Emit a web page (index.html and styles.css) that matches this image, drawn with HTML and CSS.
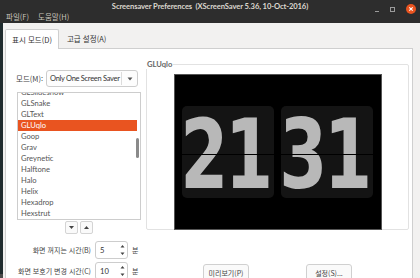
FILE: index.html
```html
<!DOCTYPE html>
<html lang="ko">
<head>
<meta charset="utf-8">
<link rel="stylesheet" href="styles.css">
</head>
<body>
<div class="screen">
  <header class="titlebar">
    <div class="title">Screensaver Preferences &nbsp;(XScreenSaver 5.36, 10-Oct-2016)</div>
    <div class="wctl">
      <span class="wmin"></span>
      <span class="wmax"></span>
      <span class="wclose"><svg width="10" height="10" viewBox="0 0 10 10"><circle cx="5" cy="5" r="5" fill="#e95420"/><path d="M3.3 3.3L6.7 6.7M6.7 3.3L3.3 6.7" stroke="#fff" stroke-width="1.1"/></svg></span>
    </div>
  </header>
  <nav class="menubar">
    <span class="menu">파일(F)</span>
    <span class="menu">도움말(H)</span>
  </nav>
  <div class="content">
    <div class="tabs">
      <div class="tab active">표시 모드(D)</div>
      <div class="tab">고급 설정(A)</div>
    </div>
    <div class="panel">
      <div class="leftcol">
        <div class="moderow">
          <span class="lbl">모드(M):</span>
          <div class="combo">
            <span class="combo-text">Only One Screen Saver</span>
            <span class="combo-btn"><svg width="6" height="4" viewBox="0 0 6 4"><path d="M0.5 0.5h5L3 3.5z" fill="#555"/></svg></span>
          </div>
        </div>
        <div class="list">
          <div class="items">
            <div class="item">GLSlideshow</div>
            <div class="item">GLSnake</div>
            <div class="item">GLText</div>
            <div class="item sel">GLUqlo</div>
            <div class="item">Goop</div>
            <div class="item">Grav</div>
            <div class="item">Greynetic</div>
            <div class="item">Halftone</div>
            <div class="item">Halo</div>
            <div class="item">Helix</div>
            <div class="item">Hexadrop</div>
            <div class="item">Hexstrut</div>
          </div>
          <div class="thumb"></div>
        </div>
        <div class="arrows">
          <span class="abtn"><svg width="5" height="3" viewBox="0 0 5 3"><path d="M0 0h5L2.5 3z" fill="#444"/></svg></span>
          <span class="abtn"><svg width="5" height="3" viewBox="0 0 5 3"><path d="M0 3h5L2.5 0z" fill="#444"/></svg></span>
        </div>
        <div class="spins">
          <span class="slbl">화면 꺼지는 시간(B)</span>
          <div class="spin"><span>5</span><span class="sarr"><svg width="5" height="12" viewBox="0 0 5 12"><path d="M0.5 3.5h4L2.5 1z M0.5 8.5h4L2.5 11z" fill="#444"/></svg></span></div>
          <span class="unit">분</span>
          <span class="slbl">화면 보호기 변경 시간(C)</span>
          <div class="spin"><span>10</span><span class="sarr"><svg width="5" height="12" viewBox="0 0 5 12"><path d="M0.5 3.5h4L2.5 1z M0.5 8.5h4L2.5 11z" fill="#444"/></svg></span></div>
          <span class="unit">분</span>
        </div>
      </div>
      <div class="rightcol">
        <fieldset class="frame">
          <legend>GLUqlo</legend>
          <div class="preview">
            <div class="card"><span class="digits">21</span><i class="split"></i></div>
            <div class="card"><span class="digits">31</span><i class="split"></i></div>
          </div>
        </fieldset>
        <div class="buttons">
          <span class="btn">미리보기(P)</span>
          <span class="btn">설정(S)...</span>
        </div>
      </div>
    </div>
  </div>
</div>
</body>
</html>
```
FILE: styles.css
```css
* { box-sizing: border-box; }
html, body { margin: 0; padding: 0; }
body {
  width: 420px; height: 278px; overflow: hidden;
  background: #4a4a4a;
  font-family: "Lato", "Noto Sans CJK KR", sans-serif;
  font-size: 8px;
  color: #3c3c3c;
}
.screen { width: 420px; height: 274px; display: flex; flex-direction: column; background: #1f2b2e; }
.titlebar {
  height: 18px; background: #2d2d2d; position: relative;
  display: flex; align-items: center; justify-content: center; padding-top: 1px;
}
.title { color: #dcd8cf; font-weight: bold; font-size: 7.6px; letter-spacing: -0.1px; }
.wctl { position: absolute; right: 4px; top: 4px; display: flex; align-items: center; gap: 11px; }
.wmin { width: 4px; height: 1px; background: #9a9a9a; margin-top: 5px; }
.wmax { width: 5px; height: 5px; border: 1px solid #9a9a9a; }
.wclose { width: 10px; height: 10px; display: flex; }
.menubar { height: 14px; background: #2d2d2d; display: flex; align-items: center; gap: 9px; padding-left: 6px; padding-bottom: 1px; }
.menu { color: #c9c5bc; font-family: "Noto Sans CJK KR", sans-serif; font-size: 7.5px; }
.content { flex: 1; margin-left: 3px; background: #f2f1f0; padding: 6px 7px 0 2px; display: flex; flex-direction: column; }
.tabs { display: flex; height: 19px; gap: 3px; }
.tab { padding: 0 5px; display: flex; align-items: center; font-family: "Noto Sans CJK KR", sans-serif; font-size: 7.5px; color: #333; }
.tab.active { background: #fff; border: 1px solid #cfcfcf; border-bottom: none; border-radius: 2px 2px 0 0; position: relative; z-index: 1; height: 20px; padding: 0 6px; }
.panel {
  flex: 1; background: #fff; border: 1px solid #cfcfcf; border-bottom: none;
  display: grid; grid-template-columns: 124px 263px; column-gap: 5px;
  padding-left: 11px;
}
.leftcol { display: flex; flex-direction: column; padding-top: 21px; }
.moderow { display: flex; align-items: center; gap: 3px; margin-left: -1px; }
.lbl { font-family: "Noto Sans CJK KR", sans-serif; font-size: 7.5px; color: #444; }
.combo { width: 92px; height: 17px; border: 1px solid #cdcdcd; border-radius: 3px; display: flex; align-items: center; background: #fdfdfd; }
.combo-text { flex: 1; padding-left: 3px; font-size: 7.5px; letter-spacing: -0.3px; color: #333; white-space: nowrap; overflow: hidden; border-right: 1px solid #dcdcdc; line-height: 13px; }
.combo-btn { width: 15px; display: flex; justify-content: center; }
.list { margin-top: 5px; height: 128px; border: 1px solid #cdcdcd; position: relative; overflow: hidden; }
.items { margin-top: -6px; }
.item { height: 11px; line-height: 11px; padding-left: 3px; color: #555; font-size: 7.6px; width: 119px; }
.item.sel { background: #e95420; color: #fff; }
.thumb { position: absolute; right: 1px; top: 45px; width: 3px; height: 20px; background: #8a8a8a; border-radius: 2px; }
.arrows { display: flex; justify-content: center; gap: 2px; margin-top: 1px; }
.abtn { width: 13px; height: 13px; border: 1px solid #d4d4d4; border-radius: 2px; display: flex; align-items: center; justify-content: center; background: #fafafa; }
.spins { display: grid; grid-template-columns: 75px 33px auto; column-gap: 4px; row-gap: 3px; margin-top: 7px; margin-left: -1px; align-items: center; }
.slbl { justify-self: end; font-family: "Noto Sans CJK KR", sans-serif; font-size: 7px; color: #444; white-space: nowrap; }
.spin { height: 18px; border: 1px solid #cdcdcd; border-radius: 3px; display: flex; align-items: center; justify-content: space-between; padding: 0 2px 0 4px; font-size: 7.6px; color: #333; }
.sarr { display: flex; }
.unit { font-family: "Noto Sans CJK KR", sans-serif; font-size: 7px; color: #444; }
.rightcol { display: flex; flex-direction: column; }
.frame { margin: 10px 0 0 0; padding: 0 0 4px 0; border: 1px solid #e2e2e2; border-radius: 2px; height: 171px; display: flex; justify-content: center; }
.frame legend { padding: 0 1px; margin-left: -1px; font-size: 7.6px; font-weight: bold; color: #666; }
.preview { width: 208px; height: 156px; background: #000; display: flex; align-items: center; gap: 7px; padding-left: 7px; margin-top: 5px; border: 1px solid #555; }
.card { width: 92px; height: 92px; background: #141414; border-radius: 5px; position: relative; display: flex; align-items: center; justify-content: center; }
.digits { font-family: "DejaVu Sans Condensed", "DejaVu Sans", sans-serif; font-stretch: condensed; font-weight: bold; font-size: 96px; color: #b8b8b8; letter-spacing: -4px; transform: scaleX(0.8); line-height: 1; margin-top: 6px; margin-left: -4px; white-space: nowrap; }
.split { position: absolute; left: 0; right: 0; top: 48px; height: 1px; background: #000; }
.buttons { display: flex; justify-content: space-evenly; margin-top: 34px; }
.btn { width: 46px; height: 20px; border: 1px solid #d0d0d0; border-radius: 3px; background: #fafafa; font-family: "Noto Sans CJK KR", sans-serif; font-size: 7px; color: #444; display: flex; justify-content: center; padding-top: 3px; }
```
